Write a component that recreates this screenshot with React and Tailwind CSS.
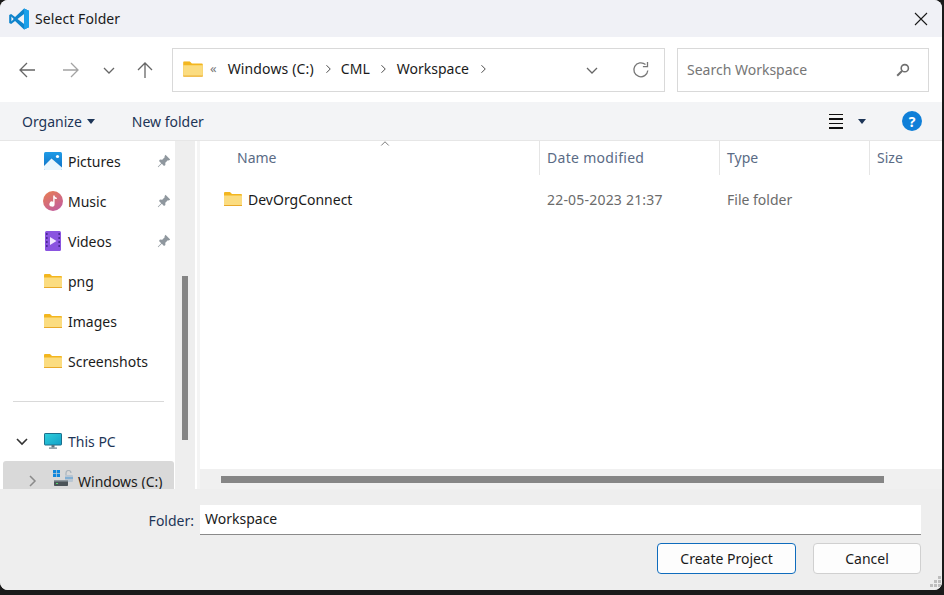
import React from "react";

const Folder = ({ className = "" }) => (
  <svg width="18" height="14" viewBox="0 0 18 14" className={className}>
    <path d="M0 1a1 1 0 0 1 1-1h5l2 2h9a1 1 0 0 1 1 1v10a1 1 0 0 1-1 1H1a1 1 0 0 1-1-1z" fill="#f3b61f" />
    <path d="M0 3.5h18V13a.8.8 0 0 1-.8.8H.8A.8.8 0 0 1 0 13z" fill="#fbdc80" />
    <rect x="0" y="13" width="18" height="1" fill="#e9a92a" />
  </svg>
);

const Pin = () => (
  <svg width="14" height="14" viewBox="0 0 14 14">
    <path d="M8.5.8 13.2 5.5 11.8 6.5 10.8 6.3 8.3 8.8 8.4 11 7 12 4.8 9.8 1.2 13.2.8 12.8 4.2 9.2 2 7 3 5.6 5.2 5.7 7.7 3.2 7.5 2.2z" fill="#8f979e" />
  </svg>
);

const PicturesIcon = () => (
  <svg width="18" height="18" viewBox="0 0 18 18">
    <defs>
      <linearGradient id="pg" x1="0" y1="0" x2="0" y2="1">
        <stop offset="0" stopColor="#1f9be6" />
        <stop offset="1" stopColor="#0f6fc4" />
      </linearGradient>
    </defs>
    <rect width="18" height="18" rx="1.5" fill="url(#pg)" />
    <circle cx="13.5" cy="4.5" r="1.6" fill="#fff" />
    <path d="M0 14 7.5 6.5 18 15.5V17a1 1 0 0 1-1 1H1a1 1 0 0 1-1-1z" fill="#eaf6fd" />
  </svg>
);

const MusicIcon = () => (
  <svg width="20" height="20" viewBox="0 0 20 20">
    <defs>
      <linearGradient id="mg" x1="0" y1="0" x2="0.6" y2="1">
        <stop offset="0" stopColor="#ea7f4f" />
        <stop offset="1" stopColor="#c45f9a" />
      </linearGradient>
    </defs>
    <circle cx="10" cy="10" r="10" fill="url(#mg)" />
    <path d="M10.2 4.5h1.4c.1 1.4 1 2 2.2 2.2v1.4c-.9 0-1.6-.3-2.2-.7V13a2.6 2.6 0 1 1-1.4-2.3z" fill="#fff" />
  </svg>
);

const VideosIcon = () => (
  <svg width="16" height="20" viewBox="0 0 16 20">
    <rect width="16" height="20" rx="1.5" fill="#8a54e0" />
    <path d="M5 6v8l6.5-4z" fill="#f1e8ff" />
    {[2, 6, 10, 14].map((y) => (
      <g key={y}>
        <rect x="1" y={y} width="1.6" height="2" fill="#4b2a96" />
        <rect x="13.4" y={y} width="1.6" height="2" fill="#4b2a96" />
      </g>
    ))}
  </svg>
);

const PcIcon = () => (
  <svg width="18" height="16" viewBox="0 0 18 16">
    <defs>
      <linearGradient id="pc" x1="0" y1="0" x2="1" y2="1">
        <stop offset="0" stopColor="#2fd0dc" />
        <stop offset="1" stopColor="#12a0c8" />
      </linearGradient>
    </defs>
    <rect x="0.5" y="0.5" width="17" height="11.5" rx="0.6" fill="url(#pc)" stroke="#1b6f8c" />
    <rect x="7.5" y="12" width="3" height="2.5" fill="#5d7480" />
    <rect x="5" y="14.5" width="8" height="1.2" fill="#6c7f8a" />
  </svg>
);

const DriveIcon = () => (
  <svg width="20" height="16" viewBox="0 0 20 16">
    <rect x="0" y="0" width="3.2" height="3.2" fill="#0f86dc" />
    <rect x="3.8" y="0" width="3.2" height="3.2" fill="#0f86dc" />
    <rect x="0" y="3.8" width="3.2" height="3.2" fill="#0f86dc" />
    <rect x="3.8" y="3.8" width="3.2" height="3.2" fill="#0f86dc" />
    <path d="M13 5V3a2.5 2.5 0 0 1 5 0" fill="none" stroke="#aab4bc" strokeWidth="1.2" />
    <rect x="12" y="5" width="8" height="7" rx="1" fill="#b9c6d2" />
    <rect x="12" y="7.5" width="8" height="1" fill="#4f9ad6" />
    <rect x="1" y="10" width="14" height="6" rx="0.8" fill="#4b5358" />
    <rect x="1" y="10" width="14" height="1.5" fill="#8d979d" />
    <rect x="3" y="13" width="2" height="1" fill="#54d66b" />
  </svg>
);

const VsCode = () => (
  <svg width="22" height="22" viewBox="0 0 24 24" className="shrink-0">
    <path d="M17.5 0.6 7.7 9.8 3.4 6.5 1.3 7.6v8.8l2.1 1.1 4.3-3.3 9.8 9.2 5.4-2.3V2.9zM17.6 6.6v10.8L10.4 12zM3.7 9.4 6.2 12l-2.5 2.6z" fill="#0f84cc" />
    <path d="M17.5 0.6l5.4 2.3v18.2l-5.4 2.3zM17.5 6.6z" fill="#1ba0ea" />
  </svg>
);

const Chevron = ({ d = "down", className = "", size = 16, color = "#555", w = 1.3 }) => {
  const p = { down: "M3 6l5 5 5-5", right: "M6 3l5 5-5 5", up: "M3 10l5-5 5 5" }[d];
  return (
    <svg width={size} height={size} viewBox="0 0 16 16" className={className}>
      <path d={p} fill="none" stroke={color} strokeWidth={w} />
    </svg>
  );
};

const Arrow = ({ dir, color }) => (
  <svg width="18" height="18" viewBox="0 0 18 18">
    {dir === "left" && <path d="M17 9H2M9 2 2 9l7 7" fill="none" stroke={color} strokeWidth="1.3" />}
    {dir === "right" && <path d="M1 9h15M9 2l7 7-7 7" fill="none" stroke={color} strokeWidth="1.3" />}
    {dir === "up" && <path d="M9 17V2M2 9l7-7 7 7" fill="none" stroke={color} strokeWidth="1.3" />}
  </svg>
);

const Caret = () => (
  <svg width="8" height="5" viewBox="0 0 8 5">
    <path d="M0 0h8L4 5z" fill="#1d3557" />
  </svg>
);

const SideRow = ({ icon, label, pin }) => (
  <div className="flex h-10 items-center">
    <div className="flex w-[24px] ml-[41px] justify-center">{icon}</div>
    <span className="ml-[3px] flex-1 text-[#1b1b1b]">{label}</span>
    {pin && <div className="mr-[4px] flex"><Pin /></div>}
  </div>
);

export default function App() {
  return (
    <div className="h-[595px] w-[944px] overflow-hidden bg-[#1a1a1a] font-['Noto_Sans',sans-serif] text-[14px]">
      <div className="flex h-[590px] w-[942px] flex-col overflow-hidden rounded-[8px] bg-[#eeeeee]">
        {/* Title bar */}
        <div className="flex h-[37px] shrink-0 items-center bg-[#f0f1f6] pl-[8px] pr-[14px]">
          <VsCode />
          <span className="ml-[5px] tracking-[0.08px] text-[#1a1a1a]">Select Folder</span>
          <svg width="14" height="14" viewBox="0 0 14 14" className="ml-auto">
            <path d="M1 1l12 12M13 1 1 13" stroke="#1a1a1a" strokeWidth="1.1" fill="none" />
          </svg>
        </div>

        {/* Nav bar */}
        <div className="flex h-[65px] shrink-0 items-center bg-white pr-[13px]">
          <div className="flex w-[172px] items-center">
            <div className="ml-[18px]"><Arrow dir="left" color="#666" /></div>
            <div className="ml-[26px]"><Arrow dir="right" color="#a3a3a3" /></div>
            <div className="ml-[21px]"><Chevron color="#666" size="16" /></div>
            <div className="ml-[19px]"><Arrow dir="up" color="#666" /></div>
          </div>
          <div className="flex h-[44px] w-[493px] items-center border-[1.5px] border-[#d9d9d9] pb-[2px] pl-[11px] text-[#1a1a1a]">
            <Folder className="mt-[1px] scale-110" />
            <span className="ml-[8px] text-[13px] text-[#777]">«</span>
            <span className="ml-[11px] tracking-[0.15px]">Windows (C:)</span>
            <Chevron d="right" size="12" className="ml-[8px] mr-[7px]" color="#444" />
            <span>CML</span>
            <Chevron d="right" size="12" className="ml-[7px] mr-[8px]" color="#444" />
            <span>Workspace</span>
            <Chevron d="right" size="12" className="ml-[8px]" color="#444" />
            <Chevron size="16" color="#666" className="ml-[95px] mt-[3px]" />
            <svg width="18" height="18" viewBox="0 0 18 18" className="ml-auto mr-[14px] mt-[2px]">
              <path d="M15.8 9.5A7 7 0 1 1 13.5 3.6" fill="none" stroke="#777" strokeWidth="1.3" />
              <path d="M15.5 1v4.6h-4.6" fill="none" stroke="#777" strokeWidth="1.3" />
            </svg>
          </div>
          <div className="ml-[12px] flex h-[44px] flex-1 items-center border-[1.5px] border-[#d9d9d9] pl-[9px] pr-[18px] text-[#767676]">
            <span>Search Workspace</span>
            <svg width="14" height="14" viewBox="0 0 14 14" className="ml-auto">
              <circle cx="8.8" cy="5.2" r="3.6" fill="none" stroke="#6f6f6f" strokeWidth="1.6" />
              <path d="M6 8 1.2 12.8" stroke="#6f6f6f" strokeWidth="2" />
            </svg>
          </div>
        </div>

        {/* Toolbar */}
        <div className="flex h-[39px] shrink-0 items-center border-b border-[#e6e6e6] bg-[#f3f4f6] pr-[20px] text-[#1d3557]">
          <span className="ml-[22px]">Organize</span>
          <div className="ml-[5px] flex"><Caret /></div>
          <span className="ml-[37px]">New folder</span>
          <div className="ml-auto mr-[13px] flex h-[18px] w-[18px] flex-col items-center justify-center gap-[3px] bg-[#f5f5f5]">
            <div className="h-[1.5px] w-[14px] bg-[#111]" />
            <div className="h-[1.5px] w-[14px] bg-[#111]" />
            <div className="h-[1.5px] w-[14px] bg-[#111]" />
            <div className="h-[1.5px] w-[14px] bg-[#111]" />
          </div>
          <Caret />
          <div className="ml-[36px] flex h-[20px] w-[20px] items-center justify-center rounded-full bg-[#0f7fd8] text-[14px] font-bold text-white">?</div>
        </div>

        {/* Body */}
        <div className="flex h-[348px] shrink-0 overflow-hidden bg-white">
          <div className="h-full w-[175px] shrink-0 overflow-hidden bg-white">
            <SideRow icon={<PicturesIcon />} label="Pictures" pin />
            <SideRow icon={<MusicIcon />} label="Music" pin />
            <SideRow icon={<VideosIcon />} label="Videos" pin />
            <SideRow icon={<Folder />} label="png" />
            <SideRow icon={<Folder />} label="Images" />
            <SideRow icon={<Folder />} label="Screenshots" />
            <div className="flex h-10 items-center pl-[13px] pr-[11px]">
              <div className="h-px w-full bg-[#d9d9d9]" />
            </div>
            <div className="flex h-10 items-center">
              <Chevron size="16" color="#333" w="1.6" className="ml-[14px]" />
              <div className="ml-[14px] flex"><PcIcon /></div>
              <span className="ml-[6px] text-[#1d3557]">This PC</span>
            </div>
            <div className="ml-[3px] mr-px flex h-10 items-start rounded-[3px] bg-[#d9d9d9] pt-[10px]">
              <Chevron d="right" size="16" color="#8a8a8a" w="1.5" className="ml-[21px] mt-[2px]" />
              <div className="ml-[13px] -mt-[1px] flex"><DriveIcon /></div>
              <span className="ml-[5px] whitespace-nowrap text-[#1b1b1b]">Windows (C:)</span>
            </div>
          </div>

          <div className="relative h-full w-[20px] shrink-0 bg-[#eeeeee]">
            <div className="absolute left-[7px] top-[135px] h-[164px] w-[6px] bg-[#858585]" />
          </div>
          <div className="w-[2px] shrink-0 bg-white" />
          <div className="w-[3px] shrink-0 bg-[#f4f4f4]" />

          <div className="flex min-w-0 flex-1 flex-col">
            <div className="relative flex h-[34px] shrink-0 items-center text-[#5a6b85]">
              <Chevron d="up" size="12" color="#777" className="absolute left-[179px] top-[-3px]" />
              <div className="ml-[37px] w-[302px] pb-[2px]">Name</div>
              <div className="h-full w-[180px] border-l border-[#e5e5e5] pl-[7px] pt-[6px] tracking-[0.3px]">Date modified</div>
              <div className="h-full w-[150px] border-l border-[#e5e5e5] pl-[7px] pt-[6px]">Type</div>
              <div className="h-full flex-1 border-l border-[#e5e5e5] pl-[7px] pt-[6px]">Size</div>
            </div>
            <div className="flex h-[48px] shrink-0 items-center">
              <div className="ml-[24px] flex"><Folder /></div>
              <span className="ml-[6px] w-[291px] text-[#1a1a1a]">DevOrgConnect</span>
              <span className="ml-[8px] w-[172px] tracking-[0.2px] text-[#6b6b6b]">22-05-2023 21:37</span>
              <span className="ml-[8px] text-[#6b6b6b]">File folder</span>
            </div>
            <div className="flex-1" />
            <div className="flex h-[20px] shrink-0 items-center bg-[#f0f0f0] pl-[21px]">
              <div className="h-[7px] w-[663px] bg-[#858585]" />
            </div>
          </div>
        </div>

        {/* Footer */}
        <div className="relative flex min-h-0 flex-1 flex-col bg-[#eeeeee] pr-[21px] pt-[16px]">
          <div className="flex items-center justify-end">
            <span className="mr-[6px] text-[#1d3557]">Folder:</span>
            <div className="flex h-[30px] w-[721px] items-center border-b border-[#8a8a8a] bg-white pb-[2px] pl-[5px] text-[#1a1a1a]">Workspace</div>
          </div>
          <div className="mt-[8px] flex justify-end">
            <button className="flex h-[31px] w-[139px] items-center justify-center rounded-[4px] border border-[#0f6cbd] bg-[#fdfdfd] text-[#1a1a1a]">Create Project</button>
            <button className="ml-[17px] flex h-[31px] w-[108px] items-center justify-center rounded-[4px] border border-[#d0d0d0] bg-[#fdfdfd] text-[#1a1a1a]">Cancel</button>
          </div>
          <svg width="12" height="12" viewBox="0 0 12 12" className="absolute bottom-[2px] right-[0px]">
            <g fill="#bdbdbd">
              <rect x="8" y="0" width="3" height="3" />
              <rect x="4" y="4" width="3" height="3" />
              <rect x="8" y="4" width="3" height="3" />
              <rect x="0" y="8" width="3" height="3" />
              <rect x="4" y="8" width="3" height="3" />
              <rect x="8" y="8" width="3" height="3" />
            </g>
          </svg>
        </div>
      </div>
    </div>
  );
}
